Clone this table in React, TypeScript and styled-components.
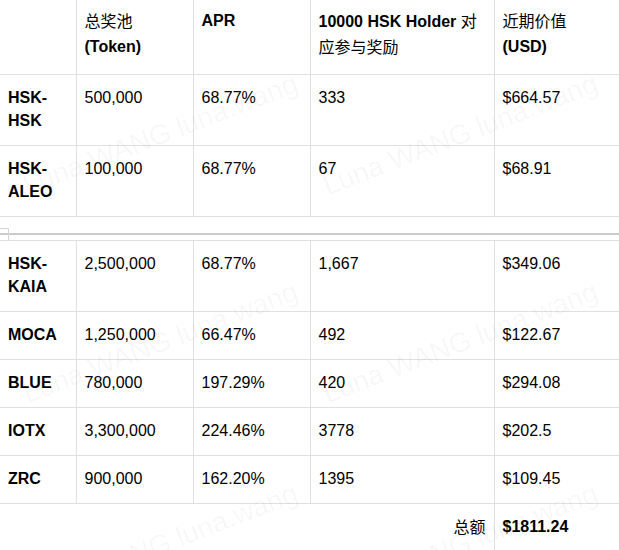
import React from "react";
import styled, { createGlobalStyle } from "styled-components";

interface RewardRow {
	pair: string;
	pool: string;
	apr: string;
	reward: string;
	value: string;
}

const topRows: RewardRow[] = [
	{ pair: "HSK-HSK", pool: "500,000", apr: "68.77%", reward: "333", value: "$664.57" },
	{ pair: "HSK-ALEO", pool: "100,000", apr: "68.77%", reward: "67", value: "$68.91" },
];

const bottomRows: RewardRow[] = [
	{ pair: "HSK-KAIA", pool: "2,500,000", apr: "68.77%", reward: "1,667", value: "$349.06" },
	{ pair: "MOCA", pool: "1,250,000", apr: "66.47%", reward: "492", value: "$122.67" },
	{ pair: "BLUE", pool: "780,000", apr: "197.29%", reward: "420", value: "$294.08" },
	{ pair: "IOTX", pool: "3,300,000", apr: "224.46%", reward: "3778", value: "$202.5" },
	{ pair: "ZRC", pool: "900,000", apr: "162.20%", reward: "1395", value: "$109.45" },
];

const colWidths = [76, 117, 117, 184, 166];

// watermark tiles, left/bottom of each text line
const marks = [
	{ x: 30, y: 202 },
	{ x: 330, y: 202 },
	{ x: 30, y: 410 },
	{ x: 330, y: 410 },
	{ x: 30, y: 612 },
	{ x: 330, y: 612 },
];

const GlobalStyle = createGlobalStyle`
	html, body {
		margin: 0;
		padding: 0;
		background: #ffffff;
	}
	body {
		font-family: "Liberation Sans", Arial, "Noto Sans CJK SC", sans-serif;
		color: #000000;
		overflow: hidden;
	}
`;

const Page = styled.div`
	position: relative;
	width: 619px;
	height: 550px;
	overflow: hidden;
	background: #ffffff;
`;

const Table = styled.table`
	border-collapse: collapse;
	table-layout: fixed;
	width: 660px;
	font-size: 16px;
	line-height: 23px;
`;

const HeadCell = styled.th`
	text-align: left;
	vertical-align: top;
	font-weight: 700;
	line-height: 25px;
	padding: 8px 8px 14px;
	border: 1px solid #e0e0e0;
	border-top: none;
	&:first-child {
		border-left: none;
	}
`;

const Cell = styled.td<{ $bold?: boolean; $align?: string; $open?: boolean }>`
	text-align: ${(p) => p.$align || "left"};
	vertical-align: top;
	font-weight: ${(p) => (p.$bold ? 700 : 400)};
	padding: 11px 8px 13px;
	border: 1px solid #e0e0e0;
	border-bottom: ${(p) => (p.$open ? "none" : "1px solid #e0e0e0")};
	&:first-child {
		border-left: none;
	}
`;

const Cn = styled.span`
	font-family: "Noto Sans CJK SC", sans-serif;
	font-weight: 400;
`;

const Divider = styled.div`
	position: relative;
	height: 23px;
	padding-top: 16px;
	box-sizing: border-box;
`;

const Rule = styled.div`
	height: 2px;
	background: #cacaca;
`;

const Handle = styled.svg`
	position: absolute;
	left: 0;
	top: 11px;
`;

const Watermark = styled.div`
	position: absolute;
	inset: 0;
	pointer-events: none;
	z-index: 2;
`;

const MarkText = styled.span<{ $x: number; $y: number }>`
	position: absolute;
	left: ${(p) => p.$x}px;
	top: ${(p) => p.$y - 32}px;
	height: 32px;
	font-family: "Liberation Sans", Arial, sans-serif;
	font-size: 28px;
	line-height: 32px;
	white-space: nowrap;
	color: rgba(0, 0, 0, 0.04);
	transform: rotate(-21deg);
	transform-origin: left bottom;
`;

const Cols = () => (
	<colgroup>
		{colWidths.map((w, i) => (
			<col key={i} style={{ width: w }} />
		))}
	</colgroup>
);

const Row = ({ row }: { row: RewardRow }) => (
	<tr>
		<Cell $bold>{row.pair}</Cell>
		<Cell>{row.pool}</Cell>
		<Cell>{row.apr}</Cell>
		<Cell>{row.reward}</Cell>
		<Cell>{row.value}</Cell>
	</tr>
);

const App = () => {
	return (
		<Page>
			<GlobalStyle />
			<Table>
				<Cols />
				<thead>
					<tr>
						<HeadCell></HeadCell>
						<HeadCell>
							<Cn>总奖池</Cn>
							<br />
							(Token)
						</HeadCell>
						<HeadCell>APR</HeadCell>
						<HeadCell>
							10000 HSK Holder <Cn>对</Cn>
							<br />
							<Cn>应参与奖励</Cn>
						</HeadCell>
						<HeadCell>
							<Cn>近期价值</Cn>
							<br />
							(USD)
						</HeadCell>
					</tr>
				</thead>
				<tbody>
					{topRows.map((r) => (
						<Row key={r.pair} row={r} />
					))}
				</tbody>
			</Table>
			<Divider>
				<Rule />
				<Handle width="9" height="13" viewBox="0 0 9 13">
					<path d="M0 0.5H8.5V12.5" fill="none" stroke="#d4d4d4" strokeWidth="1" />
				</Handle>
			</Divider>
			<Table>
				<Cols />
				<tbody>
					{bottomRows.map((r) => (
						<Row key={r.pair} row={r} />
					))}
					<tr>
						<Cell colSpan={4} $align="right" $open>
							<Cn>总额</Cn>
						</Cell>
						<Cell $bold $open>
							$1811.24
						</Cell>
					</tr>
				</tbody>
			</Table>
			<Watermark>
				{marks.map((m, i) => (
					<MarkText key={i} $x={m.x} $y={m.y}>
						Luna WANG luna.wang
					</MarkText>
				))}
			</Watermark>
		</Page>
	);
};

export default App;
